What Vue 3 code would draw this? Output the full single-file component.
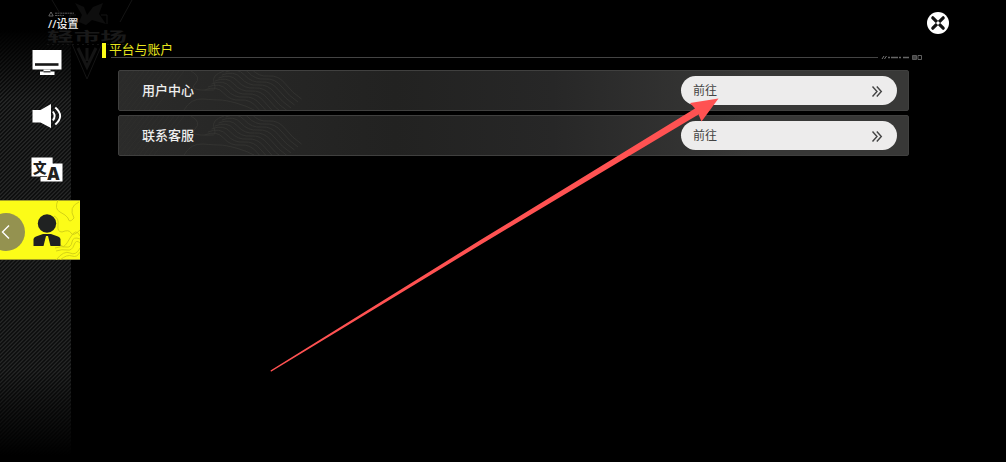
<template>
  <div class="settings">
    <svg class="emblem" width="100" height="84" viewBox="0 0 100 84">
      <g fill="none" stroke="#141414">
        <path d="M12 0 L25 22 M92 0 L80 22 M32 44 L47 79 L62 44" />
        <path d="M38 48 L47 67 L56 48 M47 48 V61" stroke-width="3" />
        <path d="M30 24 V15 H36 M67 24 V15 H61" />
        <path d="M7 44.5 H87" stroke-dasharray="2 3" />
      </g>
      <path d="M35 3 L44 7 L47 15 L53 7 L63 3 L59 14 L66 24 L52 20 L46 25 L39 22 L42 15 Z" fill="#0e0e0e" />
      <text x="7" y="40.5" textLength="80" lengthAdjust="spacingAndGlyphs">轻市场</text>
    </svg>

    <aside class="sidebar">
      <header class="title">
        <svg width="26" height="6" viewBox="0 0 26 6">
          <path d="M.8 5 L3 1 L5.2 5 Z" fill="none" stroke="#777" stroke-width=".8" />
          <path d="M7 2.2 H26 M7 4.5 H16" stroke="#555" stroke-dasharray="2 .5" />
        </svg>
        <span>//设置</span>
      </header>

      <nav class="tabs">
        <a class="tab">
          <svg width="32" height="28" viewBox="0 0 32 28">
            <path d="M1.5 1 H30.5 V20.5 H1.5 Z" fill="#fff" />
            <path d="M4 15.5 H27.5" stroke="#171717" stroke-width="2.6" />
            <path d="M12.5 20.5 H19.5 V22.5 H23.5 V26 H9 V22.5 H12.5 Z" fill="#fff" />
            <path d="M12.5 22.8 H19.5" stroke="#222" stroke-width="1.2" />
          </svg>
        </a>
        <a class="tab">
          <svg width="32" height="28" viewBox="0 0 32 28">
            <path d="M1.5 7 H9.5 L20 1 V25 L9.5 19.5 H1.5 Z" fill="#fff" />
            <path d="M21.8 8.5 Q25.5 13 21.8 17.5 M24.3 4.5 Q34 13 24.3 21.5" fill="none" stroke="#fff" stroke-width="1.9" />
          </svg>
        </a>
        <a class="tab">
          <svg width="32" height="28" viewBox="0 0 32 28">
            <path d="M.5 .5 H22 V6.5 H31.5 V24.5 H9.5 V19.5 H.5 Z" fill="#fff" />
            <text class="glyph" x="2" y="15.5" font-size="13.5">文</text>
            <text class="glyph" x="16.3" y="22.7" font-size="17">A</text>
            <path d="M22 0 V6.5 M9 19.5 H16" stroke="#222" stroke-width=".8" />
          </svg>
        </a>
        <a class="tab active">
          <svg class="contours" width="26" height="60" viewBox="0 0 26 60">
            <path d="M4 0 Q0 9 6 12 T14 18 Q15 24 20 18 Q14 7 25 2 M0 16 Q5 18 4 25 T8 32 Q15 29 17 33 T26 30 M1 44 Q6 43 8 46 T16 38 T26 36 M1 48 Q7 46 12 47 T18 42 T26 39 M2 51 Q8 49 13 50 T20 45 T26 43 M2 60 Q10 50 16 53 T26 48 M6 60 Q13 54 18 56 T26 52" />
          </svg>
          <svg class="person" width="32" height="34" viewBox="0 0 32 34">
            <circle cx="16" cy="10.5" r="9.2" />
            <path d="M2.5 33 V26 Q3 24 5 23.5 L12 21 H20 L27 23.5 Q29 24 29.5 26 V33 H19.5 L17 23 H15 L12.5 33 Z" />
          </svg>
        </a>
      </nav>
    </aside>

    <main class="content">
      <div class="section-head">
        <i class="mark"></i>
        <h1>平台与账户</h1>
        <svg class="deco" width="48" height="8" viewBox="0 0 48 8">
          <path d="M4 6 L6 3 M6.5 6 L8.5 3" stroke="#777" />
          <path d="M10 4.5 H12 M13 4.5 H20 M21 4.5 H23 M25 4.5 H31" stroke="#666" stroke-width="1.4" />
          <path d="M34.5 2.5 H38.5 V6.5 H34.5 Z" fill="#444" stroke="#666" stroke-width=".8" />
          <path d="M40 2.5 H43.5 V6.5 H40 Z" fill="none" stroke="#777" stroke-width=".8" />
        </svg>
      </div>
      <section class="rows">
        <div v-for="item in items" :key="item" class="row">
          <svg class="topo" width="240" height="39" viewBox="0 0 240 39">
            <path v-for="n in 9" :key="n" :d="contour(n)" />
            <path v-for="n in 12" :key="'h' + n" class="hatch" :d="`M${n * 5 - 25} 39 L${n * 5 + 5} 0`" />
            <path d="M72 0 Q83 6 76 13 T92 19 Q98 20 95 12 T105 0 M65 39 Q72 27 84 28 T101 29 T117 32 T135 39" />
          </svg>
          <span class="label">{{ item }}</span>
          <button class="go">
            <span>前往</span>
            <svg width="12" height="13" viewBox="0 0 12 13">
              <path d="M1.5 1.5 L6 6.5 L1.5 11.5 M5.8 1.5 L10.3 6.5 L5.8 11.5" />
            </svg>
          </button>
        </div>
      </section>
    </main>

    <button class="back">
      <svg width="10" height="16" viewBox="0 0 10 16">
        <path d="M8 1.5 L1.5 8 L8 14.5" />
      </svg>
    </button>
    <button class="close">
      <svg width="24" height="24" viewBox="0 0 24 24">
        <circle cx="12" cy="12" r="11" fill="#fff" />
        <path d="M6.8 6.8 L17.2 17.2 M17.2 6.8 L6.8 17.2" stroke="#111" stroke-width="3.2" stroke-linecap="round" />
        <path d="M12 10 L14 12 L12 14 L10 12 Z" fill="#fff" />
      </svg>
    </button>
    <svg class="arrow" width="1006" height="462" viewBox="0 0 1006 462">
      <path d="M270.5 370.6 L480 240.3 L695 108.5 L690 103 L718.5 98.5 L701.5 121.5 L698.5 114.5 L480 245 L271 371.8 Z" />
    </svg>
  </div>
</template>

<script setup>
const items = ['用户中心', '联系客服']

// topographic line, shifted up and right for each step
const contour = (n) => {
  const x = 82 + n * 3.5
  const y = 22 - n * 3
  return `M${x} ${y} q12 -5 19 3 t17 7 t17 8 t16 15`
}
</script>

<style>
body {
  margin: 0;
  background: #000;
}
</style>

<style scoped>
.settings {
  position: relative;
  display: flex;
  width: 1006px;
  height: 462px;
  overflow: hidden;
  background: #000;
  font-family: "Noto Sans", "Noto Sans CJK SC", sans-serif;
}

.emblem {
  position: absolute;
  left: 40px;
  top: 0;
}

.emblem text {
  font-size: 13px;
  font-weight: 700;
  fill: #191919;
}

.sidebar {
  width: 71px;
  flex: none;
  background:
    linear-gradient(#000 30px, transparent 100px, transparent 370px, #000 455px),
    repeating-linear-gradient(135deg, #0c0d0d 0 1px, #262727 1.5px 2.3px, #0c0d0d 2.83px);
}

.title {
  display: flex;
  flex-direction: column;
  height: 36px;
  padding: 11px 0 0 48px;
  box-sizing: border-box;
  white-space: nowrap;
}

.title span {
  position: relative;
  font-size: 11px;
  font-weight: 500;
  line-height: 13px;
  color: #eee;
}

.tabs {
  display: flex;
  flex-direction: column;
}

.tab {
  display: flex;
  align-items: center;
  height: 54px;
  padding-left: 31px;
}

.glyph {
  fill: #202020;
  font-weight: 900;
}

.active {
  position: relative;
  width: 49px;
  height: 60.5px;
  margin-top: 1.5px;
  background: #fcfc18;
  box-shadow: inset 0 1px #a5a126, inset 0 -1px #a5a126;
}

.contours {
  position: absolute;
  right: 0;
  top: 0;
  fill: none;
  stroke: #cfcd16;
  stroke-width: 0.9;
}

.person {
  position: relative;
  fill: #202222;
}

.content {
  width: 820px;
  padding: 41px 0 0 31px;
}

.section-head {
  position: relative;
  display: flex;
  align-items: flex-start;
  height: 29.4px;
}

.section-head::after {
  content: "";
  position: absolute;
  left: 9px;
  top: 16px;
  width: 767px;
  height: 1px;
  background: #444;
}

.mark {
  width: 4px;
  height: 15px;
  margin-top: 2px;
  background: #fcfc18;
}

h1 {
  margin: 0 0 0 3px;
  font-size: 12.8px;
  font-weight: 400;
  line-height: 16px;
  color: #e8e51c;
}

.deco {
  position: absolute;
  left: 776px;
  top: 12px;
}

.rows {
  display: flex;
  flex-direction: column;
  gap: 4px;
  width: 791px;
  margin-left: 16px;
}

.row {
  position: relative;
  display: flex;
  align-items: center;
  justify-content: space-between;
  height: 41px;
  padding: 0 12px 0 24px;
  box-sizing: border-box;
  border: 1px solid #40403f;
  border-radius: 2px;
  background: linear-gradient(90deg, #2b2b2a, #222221 35%, #272727 55%, #383837 80%);
}

.topo {
  position: absolute;
  left: 0;
  top: 0;
  fill: none;
  stroke: #383835;
  stroke-width: 0.7;
}

.hatch {
  stroke: #30302e;
}

.label {
  position: relative;
  margin: -2px 0 0 -1px;
  font-size: 13px;
  font-weight: 500;
  line-height: 18px;
  color: #eee;
}

.go {
  display: flex;
  align-items: center;
  justify-content: space-between;
  width: 216px;
  height: 29px;
  margin-right: -1px;
  padding: 0 14px 0 12px;
  border: 0;
  border-radius: 15px;
  background: #edecec;
  color: #444;
  font: 12px/18px "Noto Sans", "Noto Sans CJK SC", sans-serif;
}

.go svg {
  margin-top: 2px;
  fill: none;
  stroke: #444;
  stroke-width: 1.4;
}

.back {
  position: absolute;
  left: -13px;
  top: 213px;
  display: flex;
  align-items: center;
  width: 38px;
  height: 38px;
  padding: 0 0 0 14px;
  border: 0;
  border-radius: 50%;
  background: #949250;
}

.back svg {
  fill: none;
  stroke: #fff;
  stroke-width: 1.4;
}

.close {
  position: absolute;
  left: 926px;
  top: 11px;
  display: flex;
  padding: 0;
  border: 0;
  background: none;
}

.arrow {
  position: absolute;
  left: 0;
  top: 0;
  fill: #ff5252;
  pointer-events: none;
}
</style>
